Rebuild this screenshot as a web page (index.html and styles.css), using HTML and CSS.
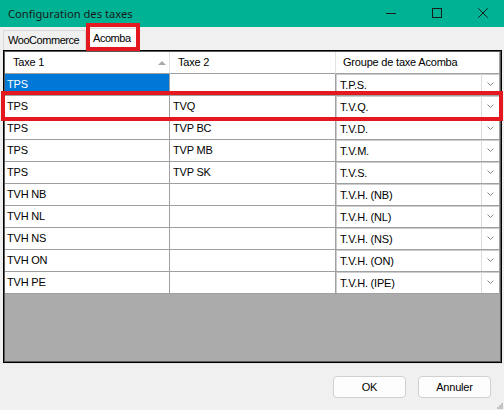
FILE: index.html
```html
<!DOCTYPE html>
<html lang="fr">
<head>
    <meta charset="UTF-8">
    <title>Configuration des taxes</title>
    <link rel="stylesheet" href="styles.css">
</head>
<body>
<div class="window">
    <div class="titlebar">
        <span class="title">Configuration des taxes</span>
        <div class="controls">
            <span class="ctl"><svg width="10" height="10" viewBox="0 0 10 10"><line x1="0" y1="5.5" x2="10" y2="5.5" stroke="#1a1a1a" stroke-width="1"/></svg></span>
            <span class="ctl"><svg width="10" height="10" viewBox="0 0 10 10"><rect x="0.5" y="0.5" width="9" height="9" fill="none" stroke="#1a1a1a" stroke-width="1"/></svg></span>
            <span class="ctl"><svg width="10" height="10" viewBox="0 0 10 10"><path d="M0.3 0.3 L9.7 9.7 M9.7 0.3 L0.3 9.7" stroke="#1a1a1a" stroke-width="1"/></svg></span>
        </div>
    </div>

    <div class="tabs">
        <div class="tab">WooCommerce</div>
        <div class="tab active marked">Acomba</div>
    </div>

    <div class="grid">
        <div class="row head">
            <div class="cell">Taxe 1<span class="sort"></span></div>
            <div class="cell">Taxe 2</div>
            <div class="cell">Groupe de taxe Acomba</div>
        </div>
        <div class="row">
            <div class="cell selected">TPS</div>
            <div class="cell"></div>
            <div class="cell combo-cell"><div class="combo"><span>T.P.S.</span><i class="arrow"><svg width="7" height="4" viewBox="0 0 7 4"><polyline points="0.5,0.5 3.5,3.5 6.5,0.5" fill="none" stroke="#8a8a8a" stroke-width="1"/></svg></i></div></div>
        </div>
        <div class="row marked">
            <div class="cell">TPS</div>
            <div class="cell">TVQ</div>
            <div class="cell combo-cell"><div class="combo"><span>T.V.Q.</span><i class="arrow"><svg width="7" height="4" viewBox="0 0 7 4"><polyline points="0.5,0.5 3.5,3.5 6.5,0.5" fill="none" stroke="#8a8a8a" stroke-width="1"/></svg></i></div></div>
        </div>
        <div class="row">
            <div class="cell">TPS</div>
            <div class="cell">TVP BC</div>
            <div class="cell combo-cell"><div class="combo"><span>T.V.D.</span><i class="arrow"><svg width="7" height="4" viewBox="0 0 7 4"><polyline points="0.5,0.5 3.5,3.5 6.5,0.5" fill="none" stroke="#8a8a8a" stroke-width="1"/></svg></i></div></div>
        </div>
        <div class="row">
            <div class="cell">TPS</div>
            <div class="cell">TVP MB</div>
            <div class="cell combo-cell"><div class="combo"><span>T.V.M.</span><i class="arrow"><svg width="7" height="4" viewBox="0 0 7 4"><polyline points="0.5,0.5 3.5,3.5 6.5,0.5" fill="none" stroke="#8a8a8a" stroke-width="1"/></svg></i></div></div>
        </div>
        <div class="row">
            <div class="cell">TPS</div>
            <div class="cell">TVP SK</div>
            <div class="cell combo-cell"><div class="combo"><span>T.V.S.</span><i class="arrow"><svg width="7" height="4" viewBox="0 0 7 4"><polyline points="0.5,0.5 3.5,3.5 6.5,0.5" fill="none" stroke="#8a8a8a" stroke-width="1"/></svg></i></div></div>
        </div>
        <div class="row">
            <div class="cell">TVH NB</div>
            <div class="cell"></div>
            <div class="cell combo-cell"><div class="combo"><span>T.V.H. (NB)</span><i class="arrow"><svg width="7" height="4" viewBox="0 0 7 4"><polyline points="0.5,0.5 3.5,3.5 6.5,0.5" fill="none" stroke="#8a8a8a" stroke-width="1"/></svg></i></div></div>
        </div>
        <div class="row">
            <div class="cell">TVH NL</div>
            <div class="cell"></div>
            <div class="cell combo-cell"><div class="combo"><span>T.V.H. (NL)</span><i class="arrow"><svg width="7" height="4" viewBox="0 0 7 4"><polyline points="0.5,0.5 3.5,3.5 6.5,0.5" fill="none" stroke="#8a8a8a" stroke-width="1"/></svg></i></div></div>
        </div>
        <div class="row">
            <div class="cell">TVH NS</div>
            <div class="cell"></div>
            <div class="cell combo-cell"><div class="combo"><span>T.V.H. (NS)</span><i class="arrow"><svg width="7" height="4" viewBox="0 0 7 4"><polyline points="0.5,0.5 3.5,3.5 6.5,0.5" fill="none" stroke="#8a8a8a" stroke-width="1"/></svg></i></div></div>
        </div>
        <div class="row">
            <div class="cell">TVH ON</div>
            <div class="cell"></div>
            <div class="cell combo-cell"><div class="combo"><span>T.V.H. (ON)</span><i class="arrow"><svg width="7" height="4" viewBox="0 0 7 4"><polyline points="0.5,0.5 3.5,3.5 6.5,0.5" fill="none" stroke="#8a8a8a" stroke-width="1"/></svg></i></div></div>
        </div>
        <div class="row">
            <div class="cell">TVH PE</div>
            <div class="cell"></div>
            <div class="cell combo-cell"><div class="combo"><span>T.V.H. (IPE)</span><i class="arrow"><svg width="7" height="4" viewBox="0 0 7 4"><polyline points="0.5,0.5 3.5,3.5 6.5,0.5" fill="none" stroke="#8a8a8a" stroke-width="1"/></svg></i></div></div>
        </div>
    </div>

    <div class="footer">
        <button class="btn">OK</button>
        <button class="btn">Annuler</button>
    </div>

    <svg class="grip" width="6" height="6" viewBox="0 0 6 6">
        <rect x="4" y="0" width="2" height="2" fill="#c4c4c4"/>
        <rect x="2" y="2" width="2" height="2" fill="#c4c4c4"/>
        <rect x="4" y="2" width="2" height="2" fill="#c4c4c4"/>
        <rect x="0" y="4" width="2" height="2" fill="#c4c4c4"/>
        <rect x="2" y="4" width="2" height="2" fill="#c4c4c4"/>
        <rect x="4" y="4" width="2" height="2" fill="#c4c4c4"/>
    </svg>
</div>
</body>
</html>
```

FILE: styles.css
```css
html,
body {
    margin: 0;
    padding: 0;
    width: 504px;
    height: 410px;
    overflow: hidden;
    background: #f0f0f0;
}

.window {
    position: relative;
    width: 504px;
    height: 410px;
    font: 11px "Liberation Sans", Arial, sans-serif;
    letter-spacing: -0.2px;
    color: #000;
}

/* title bar */
.titlebar {
    height: 27px;
    background: #00b294;
    display: flex;
    align-items: center;
}
.title {
    padding-left: 8px;
    font: 11.2px "Noto Sans", sans-serif;
    letter-spacing: 0;
    color: #1a1a1a;
    margin-top: -1px;
}
.controls {
    margin-left: auto;
    margin-right: -2px;
    display: flex;
    height: 100%;
}
.ctl {
    width: 46px;
    display: flex;
    align-items: center;
    justify-content: center;
}
.ctl svg {
    display: block;
    margin-top: -1px;
}

/* tabs */
.tabs {
    height: 23px;
    display: flex;
    align-items: flex-end;
    padding-left: 3px;
}
.tab {
    box-sizing: border-box;
    height: 20px;
    line-height: 19px;
    padding: 0 4px;
    width: 83px;
    letter-spacing: -0.45px;
    border: 1px solid #d9d9d9;
    border-bottom: none;
    background: #f0f0f0;
}
.tab.active {
    width: 49px;
    height: 22px;
    line-height: 19px;
    margin-left: 2px;
    background: #fff;
}
.marked {
    position: relative;
}
.tab.marked::after {
    content: "";
    position: absolute;
    left: -3px;
    right: -4px;
    top: -6px;
    bottom: -1px;
    border: 4px solid #e3191f;
}

/* grid */
.grid {
    box-sizing: border-box;
    margin-left: 3px;
    width: 499px;
    height: 313px;
    border: 1px solid #000;
    box-shadow: inset 0 0 0 1px #5a5a5a;
    padding: 1px;
    background: #ababab;
}
.row {
    display: grid;
    grid-template-columns: 165px 166px 1fr;
    height: 22px;
    background: #fff;
}
.cell {
    box-sizing: border-box;
    border-right: 1px solid #a0a0a0;
    border-bottom: 1px solid #a0a0a0;
    padding-left: 3px;
    line-height: 21px;
    white-space: nowrap;
    overflow: hidden;
}
.row .cell:first-child {
    padding-left: 2px;
}
.head .cell {
    border-right-color: #e3e3e3;
    padding-left: 8px;
    line-height: 21px;
}
.head .cell:first-child {
    padding-left: 8px;
    display: flex;
    justify-content: space-between;
    align-items: center;
}
.head .cell:last-child {
    padding-left: 7px;
    border-right-color: #a0a0a0;
}
.sort {
    width: 0;
    height: 0;
    margin-right: 3px;
    border-left: 4.5px solid transparent;
    border-right: 4.5px solid transparent;
    border-bottom: 4px solid #a8a8a8;
}
.selected {
    background: #0078d7;
    color: #fff;
}
.combo-cell {
    padding: 0;
}
.combo {
    box-sizing: border-box;
    height: 100%;
    display: flex;
    border-left: 1px solid #cdcdcd;
    border-top: 1px solid #cdcdcd;
}
.combo span {
    flex: 1;
    padding-left: 3px;
    line-height: 20px;
}
.arrow {
    width: 17px;
    border-left: 1px solid #dcdcdc;
    display: flex;
    align-items: center;
    justify-content: center;
    margin-top: -2px;
}
.arrow svg {
    display: block;
}
.row.marked::after {
    content: "";
    position: absolute;
    left: -4px;
    right: -3px;
    top: -5px;
    bottom: -3px;
    border: 4px solid #e3191f;
}

/* footer */
.footer {
    height: 47px;
    box-sizing: border-box;
    border-top: 1px solid #e6e6e6;
    display: flex;
    justify-content: flex-end;
    align-items: flex-start;
    gap: 12px;
    padding: 12px 13px 0 0;
}
.btn {
    width: 73px;
    height: 22px;
    padding: 0;
    background: #fdfdfd;
    border: 1px solid #d0d0d0;
    border-radius: 4px;
    font: 11px "Liberation Sans", Arial, sans-serif;
    letter-spacing: -0.2px;
    color: #000;
}
.grip {
    position: absolute;
    right: 1px;
    bottom: 1px;
}
```
